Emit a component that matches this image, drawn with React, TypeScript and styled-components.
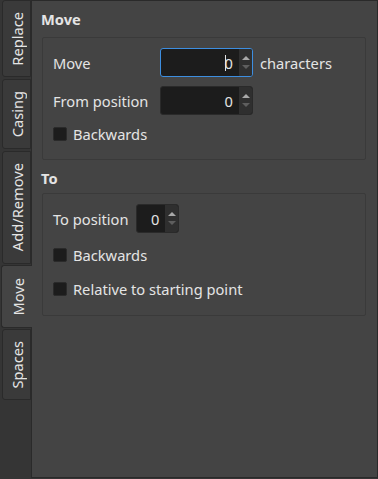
import React from "react";
import styled, { createGlobalStyle } from "styled-components";

const Global = createGlobalStyle`
  html, body { margin: 0; padding: 0; background: #353535; }
  body { font-family: "Noto Sans", "DejaVu Sans", sans-serif; font-size: 14.67px; color: #e4e4e4; }
  * { box-sizing: border-box; }
`;

const Window = styled.div`
  width: 378px;
  height: 479px;
  display: flex;
  background: #353535;
  overflow: hidden;
`;

const TabBar = styled.div`
  width: 31px;
  flex: none;
  display: flex;
  flex-direction: column;
  align-items: flex-end;
`;

const Tab = styled.div<{ $h: number; $gap: number; $active?: boolean }>`
  height: ${(p) => p.$h}px;
  margin-bottom: ${(p) => p.$gap}px;
  width: ${(p) => (p.$active ? 31 : 29)}px;
  margin-right: ${(p) => (p.$active ? -1 : 0)}px;
  position: relative;
  z-index: ${(p) => (p.$active ? 2 : 0)};
  background: ${(p) => (p.$active ? "#444444" : "#3a3a3a")};
  border: 1px solid #2a2a2a;
  border-right: ${(p) => (p.$active ? "none" : "1px solid #2a2a2a")};
  border-radius: 3px 0 0 3px;
  display: flex;
  align-items: center;
  justify-content: center;
  padding-left: ${(p) => (p.$active ? 2 : 1)}px;
`;

const TabLabel = styled.span`
  writing-mode: vertical-rl;
  transform: rotate(180deg);
  line-height: 16px;
  white-space: nowrap;
  color: #e4e4e4;
`;

const Pane = styled.div`
  width: 347px;
  height: 478px;
  background: #444444;
  border: 1px solid #2a2a2a;
  padding: 8px 11px 0 9px;
  display: flex;
  flex-direction: column;
`;

const GroupTitle = styled.div<{ $mt: number; $h: number }>`
  font-weight: bold;
  line-height: 20px;
  margin-top: ${(p) => p.$mt}px;
  height: ${(p) => p.$h}px;
`;

const Frame = styled.div<{ $h: number }>`
  margin-left: 1px;
  height: ${(p) => p.$h}px;
  border: 1px solid #3a3a3a;
  border-radius: 2px;
  padding: 10px 0 0 10px;
  display: flex;
  flex-direction: column;
`;

const FieldGrid = styled.div`
  display: grid;
  grid-template-columns: 107px auto auto;
  justify-content: start;
  row-gap: 9px;
  align-items: center;
`;

const Label = styled.span`
  line-height: 20px;
  white-space: nowrap;
`;

const Suffix = styled.span`
  margin-left: 7px;
  line-height: 20px;
`;

const InlineRow = styled.div`
  display: flex;
  align-items: center;
  gap: 8px;
`;

const SpinBox = styled.div<{ $w: number; $focus?: boolean }>`
  width: ${(p) => p.$w}px;
  height: 29px;
  border: 1px solid ${(p) => (p.$focus ? "#3d8ee0" : "#2a2a2a")};
  border-radius: 3px;
  background: #1c1c1c;
  display: flex;
  overflow: hidden;
`;

const SpinText = styled.div`
  flex: 1;
  display: flex;
  align-items: center;
  justify-content: flex-end;
  padding-right: 6px;
  line-height: 20px;
`;

const Caret = styled.span`
  display: inline-block;
  width: 1px;
  height: 16px;
  background: #e4e4e4;
  margin-right: -1px;
`;

const SpinButtons = styled.div`
  width: 13px;
  background: #2f2f2f;
  display: flex;
  flex-direction: column;
  align-items: center;
  justify-content: center;
  gap: 5px;
`;

const Arrow = styled.svg`
  display: block;
`;

const CheckRow = styled.div<{ $mt: number }>`
  display: flex;
  align-items: center;
  gap: 6px;
  margin-top: ${(p) => p.$mt}px;
`;

const Box = styled.span`
  width: 14px;
  height: 14px;
  background: #1c1c1c;
  border: 1px solid #2a2a2a;
  border-radius: 2px;
  flex: none;
`;

function Spin({ w, focus }: { w: number; focus?: boolean }) {
  return (
    <SpinBox $w={w} $focus={focus}>
      <SpinText>
        {focus && <Caret />}
        0
      </SpinText>
      <SpinButtons>
        <Arrow width="8" height="4" viewBox="0 0 8 4">
          <polygon points="0,4 4,0 8,4" fill="#a8a8a8" />
        </Arrow>
        <Arrow width="8" height="4" viewBox="0 0 8 4">
          <polygon points="0,0 8,0 4,4" fill="#5e5e5e" />
        </Arrow>
      </SpinButtons>
    </SpinBox>
  );
}

function Check({ label, mt }: { label: string; mt: number }) {
  return (
    <CheckRow $mt={mt}>
      <Box />
      <Label>{label}</Label>
    </CheckRow>
  );
}

const tabs = [
  { label: "Replace", h: 77, gap: 2 },
  { label: "Casing", h: 70, gap: 2 },
  { label: "Add/Remove", h: 113, gap: 1 },
  { label: "Move", h: 63, gap: 1, active: true },
  { label: "Spaces", h: 71, gap: 0 },
];

export default function App() {
  return (
    <>
      <Global />
      <Window>
        <TabBar>
          {tabs.map((t) => (
            <Tab key={t.label} $h={t.h} $gap={t.gap} $active={t.active}>
              <TabLabel>{t.label}</TabLabel>
            </Tab>
          ))}
        </TabBar>
        <Pane>
          <GroupTitle $mt={0} $h={28}>Move</GroupTitle>
          <Frame $h={123}>
            <FieldGrid>
              <Label>Move</Label>
              <Spin w={93} focus />
              <Suffix>characters</Suffix>
              <Label>From position</Label>
              <Spin w={93} />
              <span />
            </FieldGrid>
            <Check label="Backwards" mt={9} />
          </Frame>
          <GroupTitle $mt={8} $h={25}>To</GroupTitle>
          <Frame $h={123}>
            <InlineRow>
              <Label>To position</Label>
              <Spin w={43} />
            </InlineRow>
            <Check label="Backwards" mt={12} />
            <Check label="Relative to starting point" mt={14} />
          </Frame>
        </Pane>
      </Window>
    </>
  );
}
